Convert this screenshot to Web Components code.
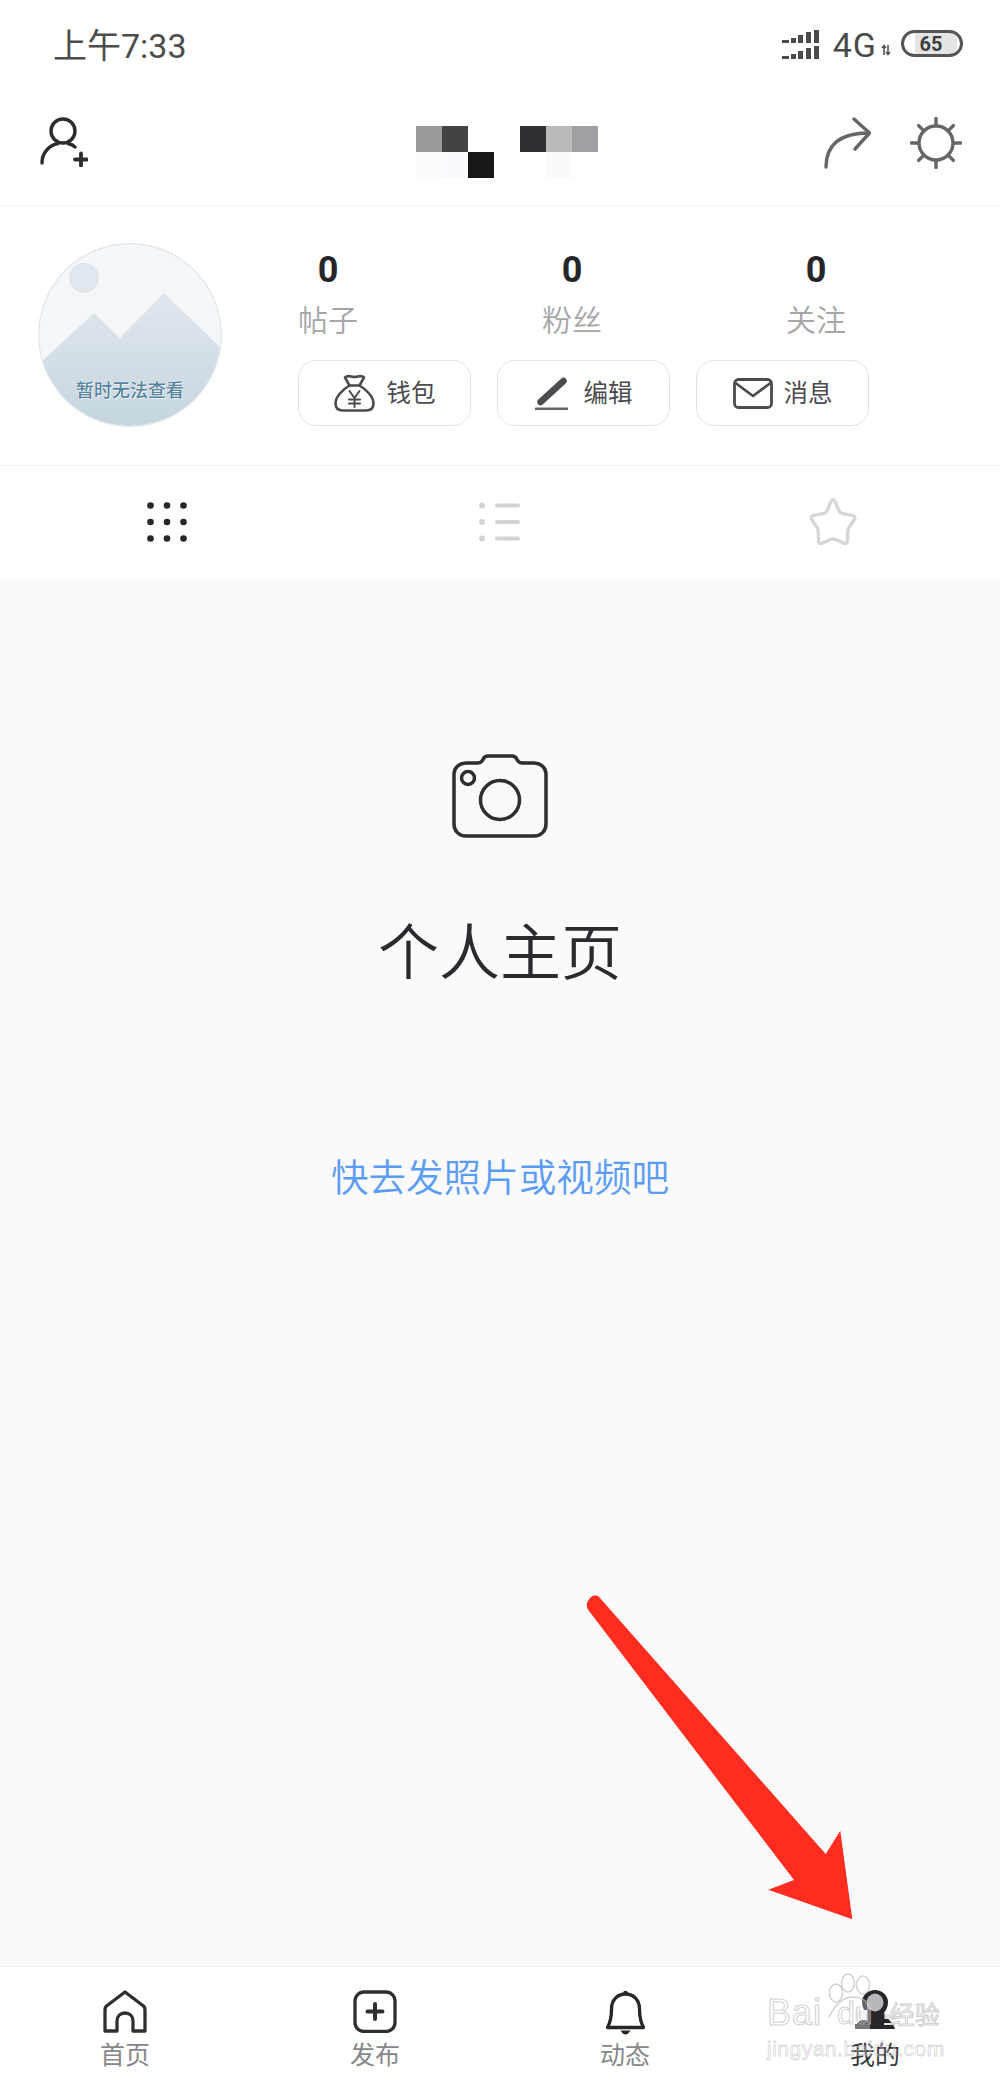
<!DOCTYPE html>
<html lang="zh-CN"><head><meta charset="utf-8"><title>个人主页</title>
<style>html,body{margin:0;padding:0;background:#fff}</style></head>
<body>
<profile-page></profile-page>
<script>
function comp(name, css, html){
  customElements.define(name, class extends HTMLElement{
    constructor(){super();
      const r=this.attachShadow({mode:'open'});
      const t=document.createElement('template');
      t.innerHTML='<style>'+css+'</style>'+html;
      r.appendChild(t.content.cloneNode(true));
    }
    connectedCallback(){
      this.shadowRoot.querySelectorAll('[data-attr]').forEach(e=>{e.textContent=this.getAttribute(e.dataset.attr)||''});
    }
  });
}
const gearTicks=[0,45,90,135,180,225,270,315].map(a=>`<line x1="26" y1="7.5" x2="26" y2="1.5" transform="rotate(${a} 26 26)"/>`).join('');

comp('status-bar',`
:host{display:flex;align-items:flex-start;height:90px;padding:0 37px 0 53px;color:#4c4c4c;box-sizing:border-box}
.time{font-size:34px;font-weight:400;line-height:40px;margin-top:26px}
.right{margin-left:auto;display:flex;align-items:flex-start;padding-top:30px}
.g{font-size:34px;font-weight:400;line-height:26px;margin:2px 0 0 14px;letter-spacing:1px;color:#4a4a4a}
.arrows{margin:14px 0 0 4px}
.bat{box-sizing:border-box;width:62px;height:27px;margin-left:10px;border:3px solid #555;border-radius:14px;display:flex;align-items:center;justify-content:center;
 font-size:20px;font-weight:700;line-height:20px;color:#3f3f3f;background:linear-gradient(90deg,#fff 0 20%,#e4e4e4 20% 94%,#fff 94%);padding-right:2px}
`,`<span class="time">上午7:33</span>
<div class="right">
<svg width="38" height="29" viewBox="0 0 38 29" fill="#4a4a4a"><path d="M1 10h7v3H1zM10 8h5v5h-5zM17 5h5v8h-5zM25 2h5v11h-5zM33 0h5v13h-5zM1 26h7v3H1zM10 24h5v5h-5zM17 21h5v8h-5zM25 18h5v11h-5zM33 16h5v13h-5z"/></svg>
<span class="g">4G</span>
<svg class="arrows" width="10" height="12" viewBox="0 0 10 12" fill="none" stroke="#555" stroke-width="1.6"><path d="M3 11V2M1 4l2-2.5L5 4M7 1v9M5 8l2 2.5L9 8"/></svg>
<span class="bat">65</span></div>`);

comp('top-bar',`
:host{display:flex;align-items:flex-start;box-sizing:border-box;height:116px;padding:27px 38px 0 40px;border-bottom:1px solid #f2f2f3}
svg{display:block;flex:none}
.blocks{display:grid;grid-template-columns:repeat(7,26px);grid-auto-rows:26px;margin:9px 0 0 328px}
.sp{margin-left:auto}.gear{margin-left:39px}
`,`<svg width="48" height="50" viewBox="0 0 48 50" fill="none" stroke="#2b2b30" stroke-width="3.4" stroke-linecap="round"><circle cx="23" cy="14" r="12"/><path d="M2 46C2 36 9 28 18 26.5M28 26.5c2.500 .6 5 1.500 7 3.500"/><path d="M41 36.500v12M35 42.500h12" stroke-width="3.800"/></svg>
<div class="blocks">${['#9a999c','#434345','','','#302f33','#bbbabb','#a09fa3','#fcfcfd','#fafafe','#171717','','','#fafafb',''].map(c=>`<i style="background:${c||'transparent'}"></i>`).join('')}</div>
<svg class="sp" width="47" height="52" viewBox="0 0 47 52" fill="none" stroke="#66666a" stroke-width="3.400" stroke-linecap="round" stroke-linejoin="round"><path d="M2 50C2 30 13 16 45 16"/><path d="M30 2L45.500 16 31 32"/></svg>
<svg class="gear" width="52" height="52" viewBox="0 0 52 52" fill="none" stroke="#66666a" stroke-width="3.400" stroke-linecap="round"><circle cx="26" cy="26" r="17"/>${gearTicks}</svg>`);

comp('stat-item',`
:host{display:block;width:62px;text-align:center}
.n{font-size:36px;font-weight:700;line-height:36px;color:#25252a;height:51px}
.l{font-size:30px;font-weight:350;line-height:36px;color:#a6a6a8;margin:0 -10px;white-space:nowrap}
`,`<div class="n"><slot></slot></div><div class="l" data-attr="label"></div>`);

comp('action-button',`
:host{box-sizing:border-box;display:flex;align-items:center;justify-content:center;width:173px;height:66px;border:1.500px solid #e3e3e5;border-radius:18px;font-size:24.500px;color:#4b4b50;background:#fff}
::slotted(svg){display:block;flex:none}
span{line-height:30px;margin:2px 0 0 var(--g,12px)}
`,`<slot name="icon"></slot><span><slot></slot></span>`);

comp('profile-head',`
:host{display:flex;box-sizing:border-box;height:260px;padding:37px 0 0 38px;border-bottom:1.500px solid #f1f1f2}
.av{position:relative;width:184px;height:184px;flex:none;margin-right:76px}
.av svg{display:block}
.av span{position:absolute;left:0;right:0;top:136px;text-align:center;font-size:18px;font-weight:500;line-height:24px;color:#55829f;text-shadow:0 0 1.500px #fff,1px 1px 0 #e8f0f4}
.stats{display:flex;gap:182px;margin:9px 0 0 -1px}
.btns{display:flex;gap:26px;margin-top:21px}
`,`<div class="av"><svg width="184" height="184" viewBox="0 0 184 184"><defs><clipPath id="c"><circle cx="92" cy="92" r="91"/></clipPath><linearGradient id="g" x1="0" y1="0" x2="0" y2="1"><stop offset="0" stop-color="#e0e7ec"/><stop offset="1" stop-color="#c5d5de"/></linearGradient></defs>
<g clip-path="url(#c)"><rect width="184" height="184" fill="#f3f7f9"/><circle cx="46" cy="35" r="15" fill="#dfe6ec"/><path d="M0 122L56 70 82 95 126 50 184 106V184H0Z" fill="url(#g)"/></g><circle cx="92" cy="92" r="91.300" fill="none" stroke="#dfe5e8" stroke-width="1.200"/></svg><span>暂时无法查看</span></div>
<div><div class="stats"><stat-item label="帖子">0</stat-item><stat-item label="粉丝">0</stat-item><stat-item label="关注">0</stat-item></div>
<div class="btns">
<action-button><svg slot="icon" width="41" height="38" viewBox="0 0 41 38" fill="none" stroke="#4b4b50" stroke-width="2.600" stroke-linejoin="round" stroke-linecap="round"><path d="M11 3.500C14 .5 17 3 20.500 3S27 .5 30 3.500L25.500 11.500h-10Z"/><path d="M15.500 11.500C8 16 1.500 23 1.500 29.500 1.500 34.500 5 36.500 9 36.500H32C36 36.500 39.500 34.500 39.500 29.500 39.500 23 33 16 25.500 11.500"/><path d="M15.500 17l5 7 5-7M20.500 24v9M15 25.500h11M15 29.500h11" stroke-width="2"/></svg>钱包</action-button>
<action-button style="--g:16px"><svg slot="icon" width="33" height="33" viewBox="0 0 33 33" fill="none" stroke="#4b4b50" stroke-linecap="round"><path d="M28.500 4L5.500 25" stroke-width="6.500"/><path d="M1 32H32" stroke-width="3" stroke="#66666a"/></svg>编辑</action-button>
<action-button style="--g:11px"><svg slot="icon" width="40" height="31" viewBox="0 0 40 31" fill="none" stroke="#4b4b50" stroke-width="2.800" stroke-linejoin="round"><rect x="1.500" y="1.500" width="37" height="28" rx="4"/><path d="M2.500 5L20 18 37.500 5"/></svg>消息</action-button>
</div></div>`);

comp('tab-strip',`
:host{display:grid;grid-template-columns:repeat(3,1fr);height:111px;background:#fff}
div{display:flex;align-items:center;justify-content:center}
svg{display:block}
`,`<div><svg width="42" height="42" viewBox="0 0 42 42" fill="#26262b">${[4.5,21,37.5].flatMap(y=>[4.5,21,37.5].map(x=>`<circle cx="${x}" cy="${y}" r="3.300"/>`)).join('')}</svg></div>
<div><svg width="41" height="42" viewBox="0 0 41 42" fill="#d3d3d5"><circle cx="3" cy="4.500" r="3"/><circle cx="3" cy="21" r="3"/><circle cx="3" cy="37.500" r="3"/><rect x="16" y="2.500" width="25" height="4" rx="2"/><rect x="16" y="19" width="25" height="4" rx="2"/><rect x="16" y="35.500" width="25" height="4" rx="2"/></svg></div>
<div><svg width="48" height="48" viewBox="0 0 50 50" fill="none" stroke="#d6d6d8" stroke-width="3.500" stroke-linejoin="round"><path d="M25 2Q26.500 2 27.500 4.500L31 13Q32 15.500 34.500 16L45 18Q48.500 19 47.500 22L41.500 31Q40.500 32.500 40.500 34.500L40 45.500Q39.500 48 36.500 47L27 43Q25 42.300 23 43L13.500 47Q10.500 48 10 45.500L9.500 34.500Q9.500 32.500 8.500 31L2.500 22Q1.500 19 5 18L15.500 16Q18 15.500 19 13L22.500 4.500Q23.500 2 25 2Z"/></svg></div>`);

comp('empty-state',`
:host{display:flex;flex-direction:column;align-items:center;flex:1;background:#fafafa;padding-top:177px;box-sizing:border-box}
svg{display:block}
h2{margin:72px 0 0;font-size:61px;line-height:88px;color:#2a2a2f;font-weight:350}
a{margin-top:154px;font-size:37.600px;font-weight:350;line-height:52px;color:#5b9cf6;text-decoration:none}
`,`<svg width="96" height="84" viewBox="0 0 96 84" fill="none" stroke="#2d2d32" stroke-width="3.500" stroke-linejoin="round"><path d="M14 9H26C29 9 30 7.500 31 5.500 32 3 33 2 36 2H60C63 2 64 3 65 5.500 66 7.500 67 9 70 9H82C89 9 94 14 94 20V70C94 77 89 82 82 82H14C7 82 2 77 2 70V20C2 14 7 9 14 9Z"/><circle cx="48" cy="46" r="19.500"/><circle cx="16" cy="24" r="6.500"/></svg>
<h2>个人主页</h2><a href="#">快去发照片或视频吧</a>`);

comp('nav-item',`
:host{display:flex;flex-direction:column;align-items:center;color:#87878b;font-size:25px}
:host([active]){color:#35353a}
::slotted(svg){display:block}
.ic{height:45px;display:flex;align-items:flex-start;justify-content:center}
span{line-height:30px;margin-top:6px}
`,`<div class="ic"><slot name="icon"></slot></div><span><slot></slot></span>`);

comp('bottom-nav',`
:host{display:grid;grid-template-columns:repeat(4,1fr);box-sizing:border-box;height:115px;padding-top:23px;background:#fff;border-top:1.500px solid #f0f0f1}
`,`<nav-item><svg slot="icon" width="44" height="43" viewBox="0 0 44 43" fill="none" stroke="#2e2e33" stroke-width="3.300" stroke-linejoin="round"><path d="M2 41V19.500Q2 17.500 3.500 16L22 2 40.500 16Q42 17.500 42 19.500V41H30V31C30 26 26.500 23 22 23S14 26 14 31V41Z"/></svg>首页</nav-item>
<nav-item><svg slot="icon" width="44" height="43" viewBox="0 0 44 43" fill="none" stroke="#2e2e33" stroke-width="3.300"><rect x="2" y="2" width="40" height="39.500" rx="9"/><path d="M22 14v15M14.500 21.500h15" stroke-width="4" stroke-linecap="round"/></svg>发布</nav-item>
<nav-item><svg slot="icon" width="41" height="45" viewBox="0 0 41 45" fill="none" stroke="#26262b" stroke-width="3.300" stroke-linejoin="round"><path d="M2.500 37.500C6 31 6.500 25 6.500 19 6.500 10 12.500 4 20.500 4S34.500 10 34.500 19C34.500 25 35 31 38.500 37.500Z"/><circle cx="20.500" cy="3" r="2.300" fill="#26262b" stroke="none"/><path d="M15.500 40.500H25.500Q23 44.500 20.500 44.500T15.500 40.500Z" fill="#26262b" stroke="none"/></svg>动态</nav-item>
<nav-item active><svg slot="icon" width="40" height="42" viewBox="0 0 40 42"><path d="M20 0C27 0 33 5 33 12 33 17 31 20 29 23 31 28 36 31 38 34L40 39H0L2 34C4 31 9 28 11 23 9 20 7 17 7 12 7 5 13 0 20 0Z" fill="#26262b"/><ellipse cx="20" cy="12.500" rx="8.500" ry="9" fill="#b7b7b9"/><path d="M0 20H12.500V30.500H0Z" fill="#f2f2f3"/><path d="M29.500 24H40V29H29.500ZM29 33H40V35H29Z" fill="#e4e4e6"/><path d="M0 34H15V39H0Z" fill="#77777b"/></svg>我的</nav-item>`);

comp('bd-watermark',`
:host{position:absolute;left:767px;top:1975px;width:182px;height:90px;display:block;font-family:"Liberation Sans",Arial,sans-serif;pointer-events:none}
.paw{position:absolute;left:60px;top:-2px}
.row{position:absolute;top:20px;left:0;display:flex;align-items:center;height:36px;color:rgba(255,255,255,.35);-webkit-text-stroke:1.100px rgba(185,185,188,.65);white-space:nowrap}
.bai{font-size:36px;letter-spacing:1px}
.du{font-size:32px;margin-left:15px}
.jy{font-size:25px;font-family:"Noto Sans CJK SC",sans-serif;margin-left:17px}
.site{position:absolute;left:0;top:61px;font-size:21px;line-height:26px;letter-spacing:.5px;color:rgba(255,255,255,.2);-webkit-text-stroke:.8px rgba(185,185,188,.6);white-space:nowrap}
`,`<svg class="paw" width="60" height="46" viewBox="0 0 60 46" fill="rgba(255,255,255,.3)" stroke="rgba(185,185,188,.65)" stroke-width="1.500"><ellipse cx="9" cy="20" rx="6.500" ry="9"/><ellipse cx="21" cy="10" rx="6.500" ry="9"/><ellipse cx="36" cy="12" rx="6.500" ry="9"/><path d="M2 44C8 32 16 24 26 24S42 29 46 36"/></svg>
<div class="row"><span class="bai">Bai</span><span class="du">du</span><span class="jy">经验</span></div><div class="site">jingyan.baidu.com</div>`);

comp('red-arrow',`
:host{position:absolute;left:580px;top:1590px;display:block;pointer-events:none}
svg{display:block}
`,`<svg width="280" height="335" viewBox="580 1590 280 335"><path d="M599.300 1597.300L825.700 1854 840.300 1830.700 852.300 1919.300 768.300 1889.700 794 1880 588.300 1610Q585 1605 588.500 1600L590 1598Q595 1593 599.300 1597.300Z" fill="#ff2d1f"/></svg>`);

comp('profile-page',`
:host{display:flex;flex-direction:column;position:relative;width:1000px;height:2081px;overflow:hidden;background:#fff;font-family:Roboto,"Noto Sans CJK SC",sans-serif}
`,`<status-bar></status-bar><top-bar></top-bar><profile-head></profile-head><tab-strip></tab-strip><empty-state></empty-state><bottom-nav></bottom-nav><bd-watermark></bd-watermark><red-arrow></red-arrow>`);
</script>
</body></html>
